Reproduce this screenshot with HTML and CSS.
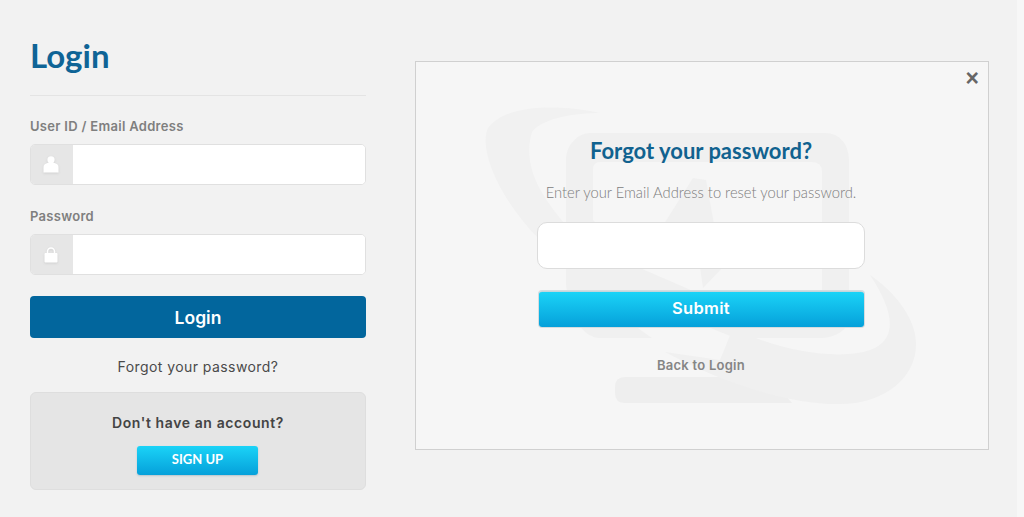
FILE: index.html
```html
<!DOCTYPE html>
<html lang="en">
<head>
  <meta charset="UTF-8" />
  <title>Login</title>
  <link rel="stylesheet" href="styles.css">
</head>
<body>

<main class="page">
  <section class="login-col">
    <h1 class="login-title">Login</h1>

    <label class="field-label">User ID / Email Address</label>
    <div class="input-group">
      <span class="input-icon">
        <svg width="16" height="17" viewBox="0 0 16 17"><circle cx="8" cy="3.800" r="3.600" fill="#fff"/><path d="M0.500 16.500V11C0.500 8 4 6.500 8 6.500S15.500 8 15.500 11V16.500z" fill="#fff"/></svg>
      </span>
      <input type="text" class="text-input" />
    </div>

    <label class="field-label label-password">Password</label>
    <div class="input-group">
      <span class="input-icon">
        <svg width="14" height="16" viewBox="0 0 14 16"><path d="M3.500 7V4.500a3.500 3.500 0 0 1 7 0V7" fill="none" stroke="#fff" stroke-width="1.500"/><rect x="0.500" y="6" width="13" height="9.500" rx="1" fill="#fff"/></svg>
      </span>
      <input type="password" class="text-input" />
    </div>

    <button class="btn-login">Login</button>
    <a href="#" class="forgot-link">Forgot your password?</a>

    <div class="signup-box">
      <p class="signup-text">Don't have an account?</p>
      <a href="#" class="btn-signup">SIGN UP</a>
    </div>
  </section>

  <section class="reset-modal">
    <!-- faded logo behind the form, viewBox uses page coordinates -->
    <svg class="watermark" width="440" height="310" viewBox="480 100 440 310">
      <path fill="#f0f0f0" fill-rule="evenodd" d="M590 133H825C840 133 849 145 849 160V318C849 330 835 338 820 338H600C585 338 570 320 566 285V160C566 145 578 133 590 133ZM600 162Q593 162 593 170V220L640 268L760 320H822V172Q822 162 812 162Z"/>
      <path fill="#f0f0f0" d="M693 178L640 262H672L694 225L703 288L722 268L706 180Z"/>
      <path fill="#f1f1f1" d="M600 113C560 104 505 104 488 128C478 150 500 200 540 240L590 262L566 225C540 195 522 165 532 132C542 118 575 113 600 113Z"/>
      <path fill="#f6f6f6" d="M625 318C665 350 705 372 745 385L800 360C760 345 720 335 690 318Z"/>
      <path fill="#eeeeee" d="M625 377H770L792 403H625Q615 403 615 393V387Q615 377 625 377Z"/>
      <path fill="#f0f0f0" d="M665 352C720 382 790 405 840 404C890 404 925 370 914 330C907 305 885 285 870 275C890 305 900 335 875 348C845 362 780 352 733 328L720 360Z"/>
    </svg>

    <a href="#" class="modal-close">×</a>

    <div class="reset-form">
      <h2 class="reset-title">Forgot your password?</h2>
      <p class="reset-text">Enter your Email Address to reset your password.</p>
      <input type="text" class="reset-input" />
      <button class="btn-submit">Submit</button>
      <a href="#" class="back-link">Back to Login</a>
    </div>
  </section>
</main>

</body>
</html>
```

FILE: styles.css
```css
body {
  margin: 0;
  background: linear-gradient(to right, #f2f2f2 1017px, #f7f7f7 1017px);
  font-family: 'Inter', 'Noto Sans', sans-serif;
}
.page {
  display: flex;
  align-items: flex-start;
  gap: 49px;
  padding: 0 35px 0 30px;
  height: 517px;
  box-sizing: border-box;
  overflow: hidden;
}
.login-col {
  width: 336px;
  flex-shrink: 0;
  display: flex;
  flex-direction: column;
}
.login-title {
  margin: 35px 0 0;
  padding-bottom: 18px;
  height: 42px;
  border-bottom: 1px solid #e4e4e4;
  font-family: 'Lato', sans-serif;
  font-size: 33px;
  line-height: 40px;
  font-weight: 700;
  color: #0f6496;
}
.field-label {
  margin-top: 22px;
  height: 17px;
  font-size: 13px;
  line-height: 17px;
  font-weight: 600;
  letter-spacing: 0.300px;
  color: #7f7f7f;
}
.label-password {
  margin-top: 23px;
}
.input-group {
  display: flex;
  height: 41px;
  margin-top: 9px;
  border: 1px solid #e0e0e0;
  border-radius: 5px;
  box-sizing: border-box;
  background: #fff;
  overflow: hidden;
}
.input-icon {
  width: 42px;
  background: #e6e6e6;
  display: flex;
  align-items: center;
  justify-content: center;
  padding-right: 3px;
  box-sizing: border-box;
}
.input-icon svg {
  filter: drop-shadow(0 1px 1px #cfcfcf);
}
.text-input {
  flex: 1;
  min-width: 0;
  border: none;
  outline: none;
  background: #fff;
}
.btn-login {
  margin-top: 21px;
  height: 42px;
  border: none;
  border-radius: 4px;
  background: #02669d;
  color: #fff;
  font-family: inherit;
  font-size: 17.500px;
  font-weight: 600;
}
.forgot-link {
  margin-top: 20px;
  text-align: center;
  font-size: 14px;
  line-height: 18px;
  letter-spacing: 0.430px;
  color: #4a4a4a;
  text-decoration: none;
}
.signup-box {
  margin-top: 16px;
  height: 98px;
  box-sizing: border-box;
  padding-top: 21px;
  border: 1px solid #dedede;
  border-radius: 6px;
  background: #e5e5e5;
  text-align: center;
}
.signup-text {
  margin: 0;
  font-size: 14px;
  line-height: 18px;
  font-weight: 600;
  letter-spacing: 0.600px;
  color: #444;
}
.btn-signup {
  display: block;
  width: 121px;
  height: 29px;
  margin: 14px 0 0 106px;
  border-radius: 3px;
  background: linear-gradient(#1bd3f7, #05a0da);
  box-shadow: 0 1px 2px #b5c4cc;
  color: #fff;
  font-family: 'Lato', sans-serif;
  font-size: 13px;
  font-weight: 700;
  line-height: 27px;
  text-decoration: none;
}
.reset-modal {
  position: relative;
  width: 574px;
  height: 389px;
  margin-top: 61px;
  box-sizing: border-box;
  border: 1px solid #d0d0d0;
  background: #f6f6f6;
  flex-shrink: 0;
}
.watermark {
  position: absolute;
  left: 64px;
  top: 38px;
}
.modal-close {
  position: absolute;
  top: 3px;
  right: 9px;
  font-family: 'Liberation Sans', sans-serif;
  font-size: 23px;
  line-height: 26px;
  font-weight: 700;
  color: #666;
  text-decoration: none;
}
.reset-form {
  position: relative;
  width: 328px;
  margin-left: 121px;
  display: flex;
  flex-direction: column;
  align-items: center;
}
.reset-title {
  margin: 74px 0 0;
  font-family: 'Lato', sans-serif;
  font-size: 22px;
  line-height: 30px;
  font-weight: 700;
  color: #11628f;
}
.reset-text {
  margin: 16px 0 0;
  font-family: 'Lato', sans-serif;
  font-size: 14.750px;
  line-height: 20px;
  font-weight: 300;
  color: #7d7d7d;
}
.reset-input {
  width: 328px;
  height: 47px;
  margin-top: 20px;
  box-sizing: border-box;
  border: 1px solid #dcdcdc;
  border-radius: 10px;
  background: #fff;
  outline: none;
}
.btn-submit {
  width: 325px;
  height: 36px;
  margin-top: 22px;
  padding: 0 0 3px;
  border: none;
  border-top: 1px solid #c4d6dc;
  border-radius: 3px;
  background: linear-gradient(#1bd3f7, #05a0da);
  box-shadow: 0 0 0 1px #d5dcdf;
  color: #fff;
  font-family: inherit;
  font-size: 16.500px;
  font-weight: 600;
  letter-spacing: 0.300px;
}
.back-link {
  margin-top: 29px;
  font-size: 13px;
  line-height: 18px;
  font-weight: 600;
  letter-spacing: 0.250px;
  color: #858585;
  text-decoration: none;
}
```
